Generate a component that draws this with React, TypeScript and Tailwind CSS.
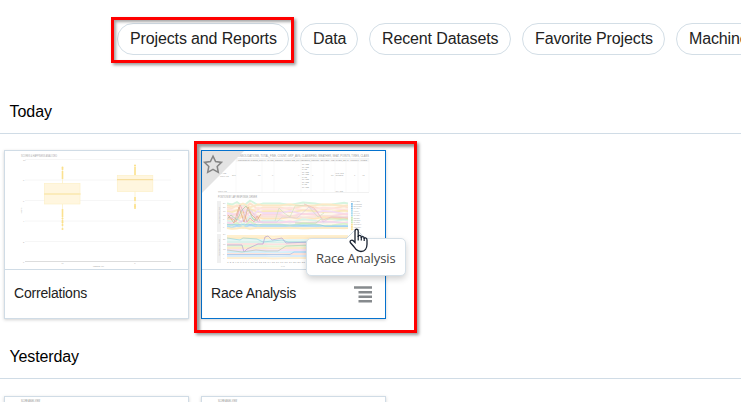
import React from "react";

const arial = "font-['Liberation_Sans',Arial,sans-serif]";

function Pill({ label, width }: { label: string; width: string }) {
  return (
    <button className={`h-8 shrink-0 rounded-full border border-[#d3dee6] bg-white text-left pl-[12px] text-[16px] leading-[30px] tracking-[-0.13px] whitespace-nowrap text-[#222] ${width}`}>
      {label}
    </button>
  );
}

function BoxPlot() {
  const dots = (x: number, ys: number[]) => ys.map((y) => <circle key={y} cx={x} cy={y} r="1" fill="#fbe08a" />);
  return (
    <svg className="block h-[118px] w-full" viewBox="5 151 183 118">
      <text x="21" y="156.6" fontSize="2.8" textLength="36" lengthAdjust="spacingAndGlyphs" fill="#aaa">SCORES &amp; HAPPINESS ANALYZED</text>
      {[159.5, 180, 200.5, 221, 241.5, 261.5].map((y, i) => (
        <g key={y}>
          <path d={`M25 ${y}H171`} stroke={i === 5 ? "#ddd" : "#f6f6f6"} strokeWidth="1" />
          <text x="23" y={y + 1} fontSize="2.2" fill="#aaa">{10 - i * 2}</text>
        </g>
      ))}
      <text x="61.5" y="264.3" fontSize="2.4" fill="#aaa">M</text>
      <text x="134.2" y="264.3" fontSize="2.4" fill="#aaa">F</text>
      <text x="93" y="266.5" fontSize="2.2" textLength="11" lengthAdjust="spacingAndGlyphs" fill="#aaa">FEEDBACK</text>
      <text transform="translate(22.3 213.5) rotate(-90)" fontSize="2.2" textLength="6" lengthAdjust="spacingAndGlyphs" fill="#aaa">SCORE</text>
      <path d="M62.5 167V228M135 165V208" stroke="#fdf3d2" />
      {dots(62.5, [167.5, 169, 172, 174, 176, 178, 210, 212, 214, 216, 218.5, 221, 222.5, 225, 229])}
      {dots(135, [165.5, 168, 170, 172, 174, 198, 200, 205, 206.5, 208])}
      <rect x="44.5" y="183.5" width="35.5" height="20.5" fill="#fff6df" stroke="#fdf0c8" strokeWidth=".7" />
      <rect x="117.3" y="175.5" width="35.5" height="16" fill="#fff6df" stroke="#fdf0c8" strokeWidth=".7" />
      <path d="M44 194H80.5" stroke="#fbebba" strokeWidth="2" />
      <path d="M117 179.7H153" stroke="#f6dfa0" strokeWidth="1.3" />
    </svg>
  );
}

const bands = ["#d6f4df", "#fbe9c6", "#fde3cf", "#ffe3e0", "#f9e7bd", "#f3dcf2", "#fcd9df", "#f8e3dc", "#ffe4bd", "#d8f4ea", "#f6d8ee", "#d9f2cd", "#b5ddf7", "#ffefcb"];
const wander = [3, -2, 4, -3, 2, -4, 3, -2, -3, 4, -2, 3, 1, -1];

function RaceLines() {
  return (
    <g fill="none">
      <rect x="227" y="203" width="121" height="26" fill="#fff8ec" />
      {bands.map((c, i) => {
        const y = 203.5 + i * 1.9;
        const d = wander[i];
        return <path key={i} stroke={c} strokeWidth="1.8" d={`M227 ${y}L232 ${y + 1}L237 ${y - d / 2}L243 ${y + d}L250 ${y - d}L258 ${y + d / 2}L263 ${y}H280L290 ${y + d / 2}L303 ${y - d / 3}L315 ${y}L323 ${y + d / 2}L332 ${y + d / 3}L344 ${y - d / 4}L348 ${y}`} />;
      })}
      <g opacity=".8">
        <path stroke="#e79aa7" strokeWidth=".8" d="M229 217L233 219L236 222L240 205L243 211L247 222L250 218L254 222L257 216L260 221" />
        <path stroke="#9acb9a" strokeWidth=".8" d="M228 218L231 215L237 220L242 210L246 206L249 211L253 219L258 221" />
        <path stroke="#c5dfba" strokeWidth=".7" d="M275 221L279 208L284 213L290 217L295 206L307 205L318 217L324 213" />
        <path stroke="#dba376" strokeWidth=".8" d="M228 215L234 223L239 207L244 222L248 207L251 214L257 220L261 214" />
        <path stroke="#d5c8e8" strokeWidth=".7" d="M227 219L235 217L242 222L247 209L252 211L258 222H277L282 217L297 218L309 207L317 211L323 222L332 217H348" />
        <path stroke="#80c5ee" strokeWidth=".9" d="M227 224.8H260L263 225H320L325 226H348" />
        <path stroke="#b5e3a4" strokeWidth=".8" d="M295 223H316L321 219H348" />
        <path stroke="#f2b9b4" strokeWidth=".8" d="M304 204L314 208L323 220L331 217L348 218" />
      </g>
      <path stroke="#fae4ba" strokeWidth=".8" d="M227 228H348" />
      {["#fff0cf", "#ffecc8", "#e5f6f4", "#d9f2ec", "#fbe3e0", "#e3f6d9", "#fbe9cc", "#f6e1f3", "#d6effa", "#fde4dc", "#d8ecfb", "#ffefd2"].map((c, i) => (
        <path key={c} stroke={c} strokeWidth="1.9" d={`M227 ${236 + i * 2}H265L273 ${236.5 + i * 2}L290 ${236 + i * 2}H348`} />
      ))}
      <g opacity=".75">
        <path stroke="#88d0dc" strokeWidth=".8" d="M227 238L240 240L243 238L257 239L263 242L282 240L288 242H310" />
        <path stroke="#a993d0" strokeWidth=".8" d="M227 245H242L244 252L247 249L258 244L263 244L265 237L268 236L272 240L282 238L286 243L310 242" />
        <path stroke="#aac6ae" strokeWidth=".8" d="M227 250L242 252L256 250L266 251L278 251L286 246L310 245" />
        <path stroke="#8ebcf0" strokeWidth=".8" d="M227 254.5H290L294 252H310" />
      </g>
    </g>
  );
}

function RacePlot() {
  const rows = [165, 167.5, 170, 172.5, 175, 177.5, 180, 182.5, 185, 187.5];
  return (
    <svg className="block h-[118px] w-full" viewBox="202 151 183 118">
      <text x="236" y="156.5" fontSize="3.2" textLength="133" lengthAdjust="spacingAndGlyphs" fill="#999">CONSOLIDATIONS, TOTAL_FINE, COUNT, GRP_AVG, CLASSIFIED, WEATHER, SEAT, POINTS, TIRES, CLASS</text>
      <path d="M218 158.5H369M218 192.5H369" stroke="#e8e8e8" strokeWidth=".6" />
      <rect x="236" y="158.3" width="133" height="3.4" fill="#f6f6f6" />
      <text x="238" y="161" fontSize="2.4" textLength="129" lengthAdjust="spacingAndGlyphs" fill="#999">CONSOLIDATIONS_TOTAL &#160; RACE_COUNT &#160; UNCLASS_PLACEMENT_COUNT &#160; DRIVER &#160; WEATHER_SEAT &#160; POINTS &#160; TIRES</text>
      <path d="M236 158V192M262 158V192M274 158V192M301 158V192M311 158V192M324 158V192M335 158V192M346 158V192M358 158V192M369 158V192" stroke="#f1f1f1" strokeWidth=".5" />
      <g fontSize="2.3" fill="#aaa">
        <text x="220" y="174">RACE</text><text x="220" y="176.6">TOTALS</text>
        <text x="232" y="175.5">201</text><text x="258" y="175.5">67</text><text x="272" y="175.5">0</text><text x="298" y="175.5">4</text><text x="312" y="175.5">1</text><text x="331" y="175.5">80</text><text x="354" y="175.5">1</text><text x="362" y="175.5">42</text>
        <text x="218" y="191.8">TOTALS</text><text x="335.5" y="191.8">CLASS</text>
        <text x="335.5" y="173.6">ROADS</text><text x="335.5" y="176.2">SPEED</text>
        {rows.map((y, i) => <text key={y} x="302" y={y} fill="#999" textLength={i % 3 === 2 ? 5 : 7} lengthAdjust="spacingAndGlyphs">RACE</text>)}
        <text x="218" y="197.8" fontSize="2.6" textLength="39" lengthAdjust="spacingAndGlyphs" fill="#999">POSITION BY LAP, RESPONSE, DRIVER</text>
      </g>
      <rect x="217" y="201" width="4" height="31" fill="#f0f0f0" />
      <rect x="217" y="234" width="4" height="29" fill="#f0f0f0" />
      <g fontSize="2.2" fill="#aaa">
        <text transform="translate(219.8 224) rotate(-90)" textLength="17" lengthAdjust="spacingAndGlyphs">POSITION COUNT</text>
        <text transform="translate(219.8 256) rotate(-90)" textLength="17" lengthAdjust="spacingAndGlyphs">POSITION COUNT</text>
        {[204, 208, 212, 216, 220, 224, 228, 235, 240, 245, 250, 255, 259].map((y, i) => <text key={y} x="223" y={y}>{24 - (i % 7) * 4}</text>)}
      </g>
      <RaceLines />
      <text x="227" y="263.3" fontSize="2.2" textLength="78" lengthAdjust="spacingAndGlyphs" fill="#aaa">1 2 3 4 5 6 7 8 9 10 11 12 13 14 15 16 17 18 19 20 21 22</text>
      <text x="281" y="266.8" fontSize="2" fill="#aaa">LAP</text>
      <text x="351" y="201.6" fontSize="2.3" textLength="9" lengthAdjust="spacingAndGlyphs" fill="#aaa">DRIVER</text>
      {["ALONSO", "BUTTON", "GASLY", "HULK", "KVYAT", "MASSA", "OCON", "PEREZ", "SAINZ", "STROLL", "VETTEL", "WEHR"].map((name, i) => (
        <g key={name}>
          <rect x="351" y={203 + i * 2.3} width="1.8" height="1.9" fill={["#88c4ec", "#a8ddf2", "#c9eab9", "#fae198"][Math.floor(i / 3)]} />
          <text x="353.5" y={204.7 + i * 2.3} fontSize="2" fill="#aaa">{name}</text>
        </g>
      ))}
    </svg>
  );
}

function Card({ title, active = false, children }: { title: string; active?: boolean; children: React.ReactNode }) {
  return (
    <article className={`relative h-[169px] w-[185px] shrink-0 border bg-white shadow-[0_1px_3px_rgba(0,0,0,0.18)] ${active ? "border-[#0572ce]" : "border-[#d0dce6]"}`}>
      <div className="h-[119px] border-b border-[#d0dce6]">{children}</div>
      <div className="flex h-12 items-start justify-between pt-[13px] pr-[13px] pl-[9px] text-[14px] leading-[21px] text-[#222]">
        <span className={active ? "tracking-[-0.22px]" : "tracking-[-0.2px]"}>{title}</span>
        {active && (
          <svg width="18" height="17" viewBox="0 0 18 17" className="mt-[3px]">
            <path d="M0 1.5H18M4.5 6.2H18M4.5 10.7H18M4.5 15.2H18" stroke="#868a8d" strokeWidth="2.4" />
          </svg>
        )}
      </div>
      {active && (
        <svg className="absolute top-0 left-0" width="42" height="42" viewBox="0 0 42 42">
          <path d="M0 0H42L0 42Z" fill="#e3e3e3" />
          <path d="M11 5.2L13.6 10.6L19.5 11.4L15.2 15.5L16.3 21.3L11 18.4L5.7 21.3L6.8 15.5L2.5 11.4L8.4 10.6Z" fill="none" stroke="#858585" strokeWidth="1.5" />
        </svg>
      )}
    </article>
  );
}

function ThumbTitle() {
  return (
    <svg className="block h-[118px] w-full" viewBox="0 0 183 118">
      <text x="16" y="4.8" fontSize="2.6" textLength="19" lengthAdjust="spacingAndGlyphs" fill="#888">SCORE ANGEL VIEW</text>
    </svg>
  );
}

function Tooltip() {
  return (
    <div className="absolute top-[238px] left-[306px] h-[38px] w-[100px] rounded-[5px] border border-[#d5e0e8] bg-white shadow-[0_3px_6px_rgba(0,0,0,0.18)]">
      <svg className="absolute -top-[11px] left-[39px]" width="20" height="12" viewBox="0 0 20 12">
        <path d="M0 11L10 1L20 11V12H0Z" fill="white" />
        <path d="M0 11L10 1L20 11" fill="none" stroke="#ccd9e3" />
      </svg>
      <span className="block pl-[9px] text-[13px] leading-[39px] tracking-[-0.12px] whitespace-nowrap text-[#444] font-['Open_Sans','Noto_Sans',sans-serif]">Race Analysis</span>
      <svg className="absolute -top-[11px] left-[42px]" width="20" height="25" viewBox="0 0 20 25">
        <path d="M6 14V3.2C6 .3 9.2.3 9.2 3.2V9C9.2 6.7 12.3 6.8 12.3 9.2V10C12.3 8.2 15.2 8.2 15.2 10.5V11C15.2 9.3 18 9.4 18 12V16.2C18 20 16 23.5 12 23.5C8 23.5 6.9 21.5 5.2 19L1.5 14.8C.2 12.8 2.8 11.2 4.3 12.7L6 14.4Z" fill="white" stroke="#182130" strokeWidth="1.3" />
        <path d="M9.2 8V12.5M12.3 9V12.5M15.2 10V13" stroke="#182130" strokeWidth="1.2" />
      </svg>
    </div>
  );
}

export default function App() {
  return (
    <main className={`relative h-[402px] w-[741px] overflow-hidden bg-white ${arial}`}>
      <nav className="flex gap-[11px] pt-[23px] pl-[117px]">
        <Pill label="Projects and Reports" width="w-[172px]" />
        <Pill label="Data" width="w-[58px]" />
        <Pill label="Recent Datasets" width="w-[142px]" />
        <Pill label="Favorite Projects" width="w-[143px]" />
        <Pill label="Machine Learning" width="w-[155px]" />
      </nav>
      <h2 className="mt-[34px] h-[45px] border-b border-[#d0dce6] pl-[9.5px] text-[16px] leading-[45px] tracking-[-0.05px] text-black">Today</h2>
      <section className="flex gap-3 pt-4 pl-1">
        <Card title="Correlations"><BoxPlot /></Card>
        <Card title="Race Analysis" active><RacePlot /></Card>
      </section>
      <h2 className="mt-[15px] h-[45px] border-b border-[#d0dce6] pl-[9.5px] text-[16px] leading-[45px] tracking-[-0.13px] text-black">Yesterday</h2>
      <section className="flex gap-3 pt-[17px] pl-1">
        <Card title=""><ThumbTitle /></Card>
        <Card title=""><ThumbTitle /></Card>
      </section>
      <div className="pointer-events-none absolute top-[17px] left-[111px] h-[46px] w-[183px] border-3 border-[#ff0000] shadow-[2px_2px_3px_rgba(0,0,0,0.4),inset_2px_2px_3px_rgba(0,0,0,0.35)]" />
      <div className="pointer-events-none absolute top-[141px] left-[194px] h-[192px] w-[223px] border-3 border-[#ff0000] shadow-[2px_2px_3px_rgba(0,0,0,0.4),inset_3px_3px_3px_rgba(0,0,0,0.4)]" />
      <Tooltip />
    </main>
  );
}
